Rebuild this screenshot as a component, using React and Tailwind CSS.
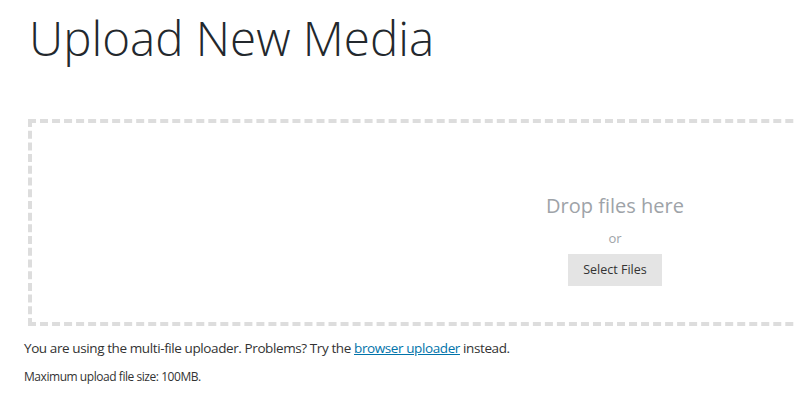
export default function App() {
  return (
    <div className="min-h-screen w-[796px] overflow-hidden bg-white text-[#444] font-['Open_Sans',sans-serif]">
      <h1 className="pl-[29px] pt-[13px] text-[47.5px] leading-[50px] font-light text-[#23282d]">Upload New Media</h1>

      {/* drop area */}
      <div className="mt-[56px] ml-[28px] w-[1174px] h-[207px] border-4 border-dashed border-[#dddddd] flex flex-col items-center pt-[70px]">
        <div className="text-[20px] leading-[26px] text-[#9ea3a8]">Drop files here</div>
        <div className="mt-[10px] text-[13px] leading-[18px] text-[#9ea3a8]">or</div>
        <button className="mt-[7px] w-[94px] h-[32px] bg-[#e4e4e4] text-[12.5px] text-[#333]">Select Files</button>
      </div>

      <p className="mt-[12px] pl-[24px] text-[13.5px] leading-[20px] tracking-[-0.4px] text-[#333]">
        You are using the multi-file uploader. Problems? Try the{' '}
        <a href="#" className="text-[#0073aa] underline">browser uploader</a> instead.
      </p>
      <p className="mt-[10px] pl-[24px] text-[12px] leading-[18px] tracking-[-0.45px] text-[#333]">Maximum upload file size: 100MB.</p>
    </div>
  );
}
